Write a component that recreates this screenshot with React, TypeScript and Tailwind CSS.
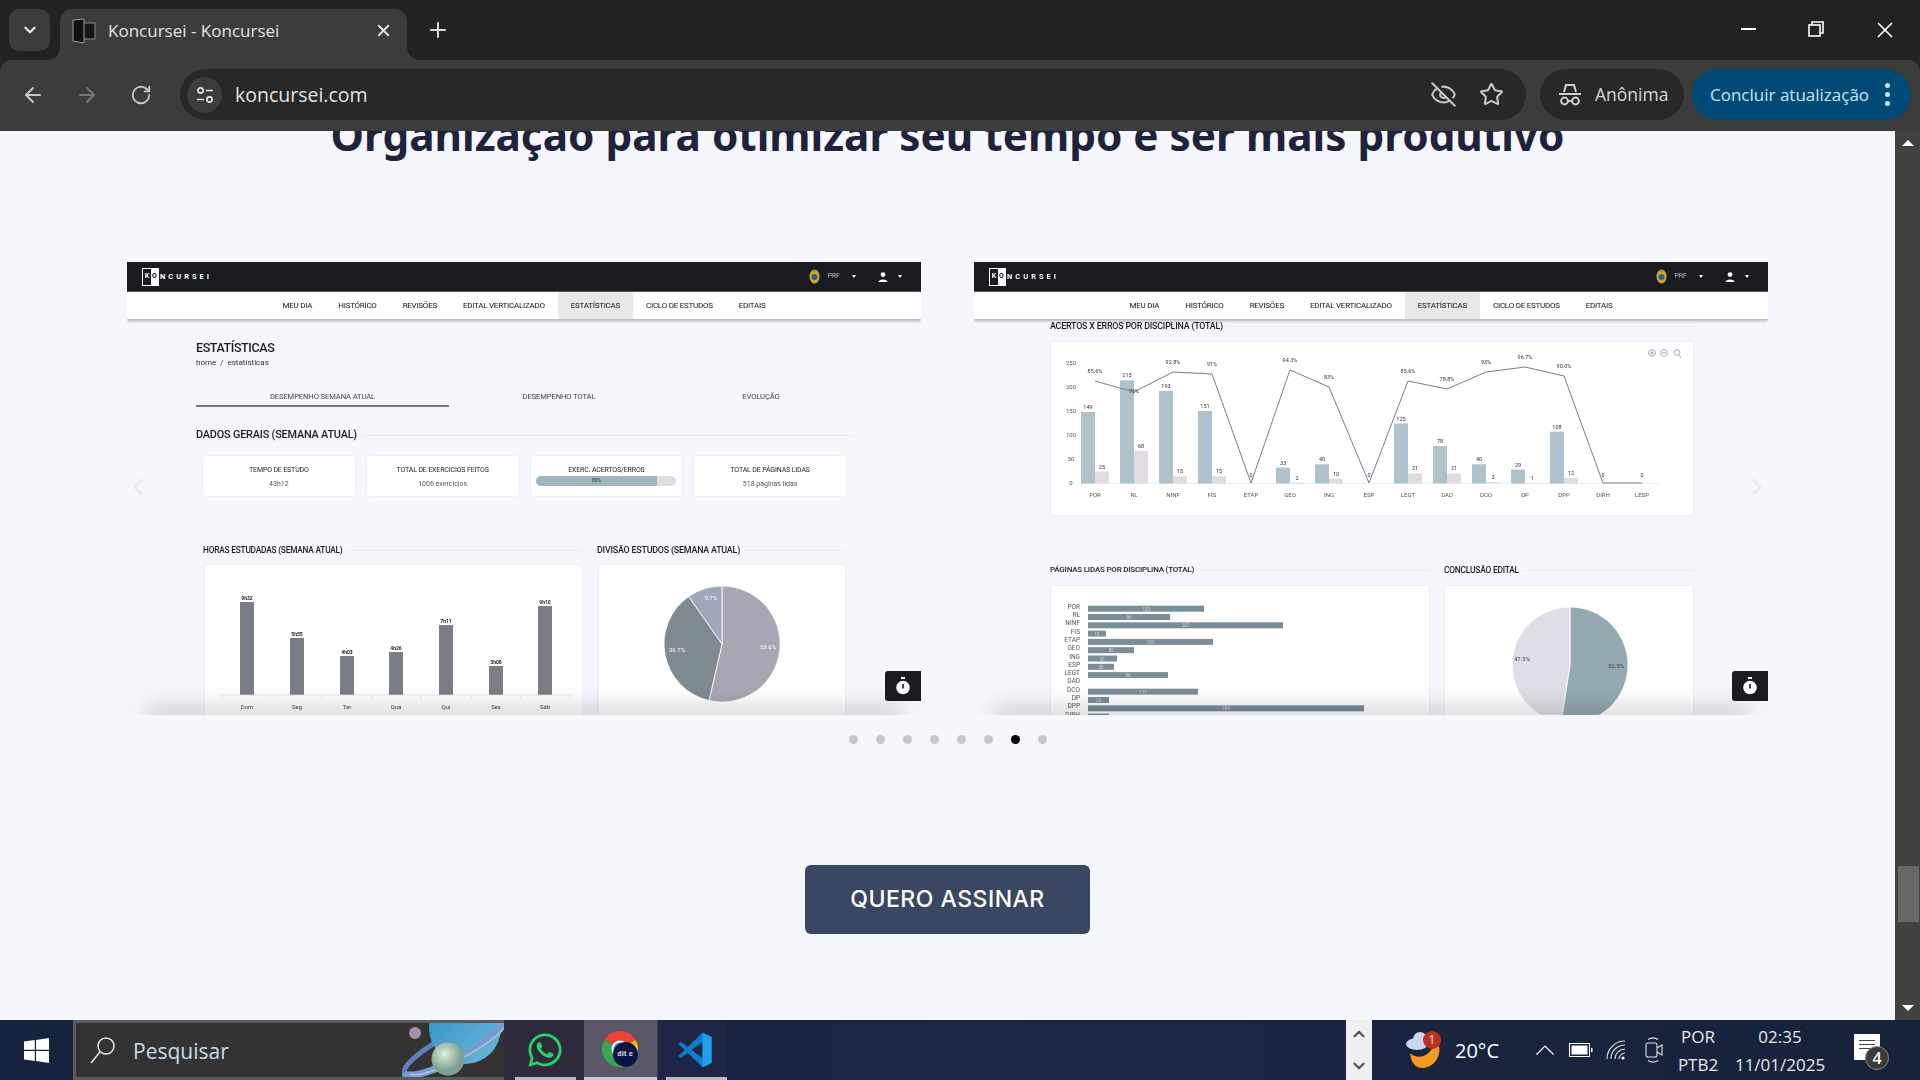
import React from "react";
import { ArrowLeft, ArrowRight, RotateCw, X, Plus, ChevronDown, ChevronUp, EyeOff, Star, ChevronLeft, ChevronRight } from "lucide-react";
import { FaWhatsapp } from "react-icons/fa";

const nav = ["MEU DIA", "HISTÓRICO", "REVISÕES", "EDITAL VERTICALIZADO", "ESTATÍSTICAS", "CICLO DE ESTUDOS", "EDITAIS"];

function Caret() {
  return <span className="inline-block w-0 h-0 border-x-[2.5px] border-x-transparent border-t-[3px] border-t-white" />;
}

function AppHeader() {
  return (
    <div>
      <div className="h-[30px] bg-[#1a1b20] flex items-center border-b border-[#555] pl-[15px] pr-[19px]">
        <div className="flex items-center h-[18px] w-[17px] border border-white">
          <span className="w-[8px] text-center text-[7px] leading-none font-bold text-white">K</span>
          <span className="w-[7px] h-full bg-white flex items-center justify-center text-[7px] leading-none font-bold text-black">O</span>
        </div>
        <span className="ml-[1px] text-[7.5px] font-bold tracking-[3px] text-white">NCURSEI</span>
        <div className="flex-1" />
        <svg width="11" height="15" viewBox="0 0 11 15"><ellipse cx="5.5" cy="7.5" rx="5" ry="7" fill="#c9a928" /><circle cx="5.5" cy="8" r="3" fill="#3a5a8c" /><path d="M3.5 2h4" stroke="#8a7a30" /></svg>
        <span className="ml-[7px] text-[7px] text-[#bbb]">PRF</span>
        <span className="ml-[12px] flex"><Caret /></span>
        <svg className="ml-[22px]" width="10" height="10" viewBox="0 0 10 10" fill="#fff"><circle cx="5" cy="2.6" r="2.4" /><path d="M0.5 10 C0.5 6.5 9.5 6.5 9.5 10Z" /></svg>
        <span className="ml-[10px] flex"><Caret /></span>
      </div>
      <div className="relative h-[27px] bg-white flex justify-center shadow-[0_2px_3px_rgba(0,0,0,0.28)]">
        {nav.map((n) => (
          <div key={n} className={`px-[13px] flex items-center text-[8px] tracking-[-0.25px] whitespace-nowrap text-[#111] ${n === "ESTATÍSTICAS" ? "bg-[#e8e8e8]" : ""}`}>{n}</div>
        ))}
      </div>
    </div>
  );
}

function SectionTitle({ t, size }: { t: string; size: string }) {
  return (
    <div className="flex items-center gap-[5px]">
      <span className={`${size} font-medium leading-[12px] tracking-[-0.2px] whitespace-nowrap text-[#1d1d1f]`}>{t}</span>
      <div className="flex-1 h-[1px] bg-[#e9ebf1]" />
    </div>
  );
}

function StatCard({ label, value, bar }: { label: string; value?: string; bar?: boolean }) {
  return (
    <div className="h-[42px] bg-white rounded-[3px] border border-[#eef0f5] flex flex-col items-center pt-[10px]">
      <div className="text-[7px] leading-[9px] tracking-[-0.15px] text-[#222] whitespace-nowrap">{label}</div>
      {bar ? (
        <div className="mt-[1px] w-[140px] h-[10px] rounded-full bg-[#e2dbe2] overflow-hidden">
          <div className="w-[86%] h-full bg-[#9fb4bf] flex items-center justify-center text-[5px] text-[#333]">86%</div>
        </div>
      ) : (
        <div className="mt-[5px] text-[7px] leading-[9px] text-[#555] whitespace-nowrap">{value}</div>
      )}
    </div>
  );
}

function BottomFade() {
  return <div className="absolute left-[20px] right-[20px] -bottom-[10px] h-[20px] bg-black/15 blur-[10px]" />;
}

function Timer() {
  return (
    <div className="absolute right-0 bottom-[14px] w-[36px] h-[30px] bg-[#1a1b1f] rounded-l-[3px] flex items-center justify-center">
      <svg width="14" height="18" viewBox="0 0 14 18" fill="#fff"><rect x="5" y="0" width="4" height="2" /><circle cx="7" cy="10.5" r="6.8" /><rect x="6.2" y="7" width="1.6" height="4.5" fill="#1a1b1f" /></svg>
    </div>
  );
}

function LeftSlide() {
  const bars = [
    [240, 603, "9h32", "Dom"], [290, 639, "5h55", "Seg"], [340, 657, "4h03", "Ter"], [389, 653, "4h26", "Qua"],
    [439, 626, "7h11", "Qui"], [489, 667, "3h08", "Sex"], [538, 607, "9h10", "Sáb"],
  ] as const;
  return (
    <div className="relative w-[794px] h-[453px] overflow-hidden">
      <div className="blur-[0.4px]">
        <AppHeader />
        <div className="pl-[69px] pr-[68px]">
          <div className="mt-[21px] text-[12.5px] leading-[16px] font-medium tracking-[-0.4px] text-[#1d1d1f]">ESTATÍSTICAS</div>
          <div className="mt-[2px] text-[8px] leading-[10px] text-[#333]">home&nbsp; /&nbsp; estatísticas</div>
          <div className="mt-[22px] flex text-[7.6px] leading-[14px] tracking-[-0.1px] text-[#444] text-center">
            <div className="w-[253px] h-[17px] border-b-2 border-[#777]">DESEMPENHO SEMANA ATUAL</div>
            <div className="w-[220px]">DESEMPENHO TOTAL</div>
            <div className="w-[184px]">EVOLUÇÃO</div>
          </div>
          <div className="mt-[22px]"><SectionTitle t="DADOS GERAIS (SEMANA ATUAL)" size="text-[10.9px]" /></div>
          <div className="mt-[14px] px-[6px] grid grid-cols-4 gap-[10px]">
            <StatCard label="TEMPO DE ESTUDO" value="43h12" />
            <StatCard label="TOTAL DE EXERCICIOS FEITOS" value="1006 exercícios" />
            <StatCard label="EXERC. ACERTOS/ERROS" bar />
            <StatCard label="TOTAL DE PÁGINAS LIDAS" value="518 páginas lidas" />
          </div>
          <div className="mt-[47px] ml-[7px] mr-[6px] grid grid-cols-[379px_248px] gap-[15px]">
            <SectionTitle t="HORAS ESTUDADAS (SEMANA ATUAL)" size="text-[8.3px]" />
            <SectionTitle t="DIVISÃO ESTUDOS (SEMANA ATUAL)" size="text-[8.9px]" />
          </div>
          <div className="mt-[8px] ml-[8px] mr-[7px] grid grid-cols-[379px_248px] gap-[15px]">
            <div className="h-[170px] bg-white rounded-[3px] border border-[#eef0f5]">
              <svg width="377" height="168" viewBox="205 566 377 168" className="block">
                {bars.map(([x, y, v, d]) => (
                  <g key={d}>
                    <rect x={x} y={y} width="14" height={696 - y} fill="#7b7e87" />
                    <text x={x + 7} y={y - 2} fontSize="5" fontWeight="700" textAnchor="middle" fill="#222">{v}</text>
                    <text x={x + 7} y="710" fontSize="6" textAnchor="middle" fill="#444">{d}</text>
                  </g>
                ))}
                <path d="M222 696H570M222 696v4M272 696v4M322 696v4M372 696v4M421 696v4M471 696v4M521 696v4M570 696v4" stroke="#dcdfe4" strokeWidth="0.7" />
              </svg>
            </div>
            <div className="h-[170px] bg-white rounded-[3px] border border-[#eef0f5]">
              <svg width="246" height="168" viewBox="1 1 246 168" className="block">
                <path d="M124 80 V22 A58 58 0 1 1 111 136.5 Z" fill="#a8a6b3" stroke="#fff" strokeWidth="0.8" />
                <path d="M124 80 L111 136.5 A58 58 0 0 1 90.7 32.5 Z" fill="#7f8a91" stroke="#fff" strokeWidth="0.8" />
                <path d="M124 80 L90.7 32.5 A58 58 0 0 1 124 22 Z" fill="#9fa8ba" stroke="#fff" strokeWidth="0.8" />
                <text x="170" y="85" fontSize="6" textAnchor="middle" fill="#fff">53.6%</text>
                <text x="79" y="88" fontSize="6" textAnchor="middle" fill="#fff">36.7%</text>
                <text x="113" y="36" fontSize="6" textAnchor="middle" fill="#fff">9.7%</text>
              </svg>
            </div>
          </div>
        </div>
      </div>
      <BottomFade />
      <Timer />
      <ChevronLeft className="absolute -left-[3px] top-[211px] text-[#e9ebf0]" size={28} strokeWidth={2.5} />
    </div>
  );
}

function RightSlide() {
  const xs = [1095, 1134, 1173, 1212, 1251, 1290, 1329, 1369, 1408, 1447, 1486, 1525, 1564, 1603, 1642];
  const labels = ["POR", "RL", "NINF", "FIS", "ETAP", "GEO", "ING", "ESP", "LEGT", "DAD", "DCO", "DP", "DPP", "DIRH", "LESP"];
  const ac = [149, 215, 193, 151, 0, 33, 40, 0, 125, 78, 40, 29, 108, 0, 0];
  const er = [25, 68, 15, 15, 0, 2, 10, 0, 21, 21, 3, 1, 12, 0, 0];
  const ly = [381, 392, 372, 374, 483, 370, 387, 483, 381, 389, 372, 367, 376, 483, 483];
  const pct: (string | null)[] = ["85.6%", "76%", "92.8%", "91%", null, "94.3%", "83%", null, "85.6%", "78.8%", "93%", "96.7%", "90.0%", null, null];
  const y = (v: number) => 483.5 - v * 0.48;
  const hb = [
    ["POR", 1204, 123], ["RL", 1170, 86], ["NINF", 1283, 207], ["FIS", 1106, 19], ["ETAP", 1213, 133], ["GEO", 1134, 50], ["ING", 1117, 31],
    ["ESP", 1114, 28], ["LEGT", 1168, 86], ["DAD", 0, 0], ["DCO", 1198, 117], ["DP", 1109, 23], ["DPP", 1364, 294], ["DIRH", 1109, 23],
  ] as const;
  return (
    <div className="relative w-[794px] h-[453px] overflow-hidden">
      <div className="blur-[0.4px]">
        <AppHeader />
        <div className="pl-[76px] pr-[74px]">
          <div className="mt-[1px]"><SectionTitle t="ACERTOS X ERROS POR DISCIPLINA (TOTAL)" size="text-[8.9px]" /></div>
          <div className="mt-[9px] h-[175px] bg-white rounded-[3px] border border-[#eef0f5]">
            <svg width="642" height="173" viewBox="1051 342 642 173" className="block">
              {[250, 200, 150, 100, 50, 0].map((v) => (
                <text key={v} x="1071" y={y(v) + 1} fontSize="6" textAnchor="middle" fill="#555">{v}</text>
              ))}
              <line x1="1081" x2="1660" y1="483.5" y2="483.5" stroke="#e3e6ea" strokeWidth="0.7" />
              {xs.map((x, i) => (
                <g key={labels[i]}>
                  {ac[i] > 0 && <rect x={x - 14} y={y(ac[i])} width="14" height={ac[i] * 0.48} fill="#afc2cb" />}
                  {er[i] > 0 && <rect x={x} y={y(er[i])} width="14" height={er[i] * 0.48} fill="#e2dce2" />}
                  {ac[i] > 0 && <text x={x - 7} y={y(ac[i]) - 3} fontSize="5.5" textAnchor="middle" fill="#333">{ac[i]}</text>}
                  {er[i] > 0 && <text x={x + 7} y={y(er[i]) - 3} fontSize="5.5" textAnchor="middle" fill="#333">{er[i]}</text>}
                  {ac[i] === 0 && <text x={x} y="477" fontSize="5.5" textAnchor="middle" fill="#333">0</text>}
                  {pct[i] && <text x={x} y={ly[i] - (i === 1 ? -1 : 8)} fontSize="5.5" textAnchor="middle" fill="#333">{pct[i]}</text>}
                  <text x={x} y="497" fontSize="6" textAnchor="middle" fill="#555">{labels[i]}</text>
                </g>
              ))}
              <polyline points={xs.map((x, i) => `${x},${ly[i]}`).join(" ")} fill="none" stroke="#777d95" strokeWidth="1" />
              <g fill="none" stroke="#8a97a3" strokeWidth="0.8">
                <circle cx="1652" cy="353" r="3.4" /><path d="M1650 353h4M1652 351v4" />
                <circle cx="1664" cy="353" r="3.4" /><path d="M1662 353h4" />
                <circle cx="1677" cy="352.5" r="2.8" /><path d="M1679 355l2 3" />
              </g>
            </svg>
          </div>
          <div className="mt-[48px] grid grid-cols-[380px_250px] gap-[14px]">
            <SectionTitle t="PÁGINAS LIDAS POR DISCIPLINA (TOTAL)" size="text-[8px]" />
            <SectionTitle t="CONCLUSÃO EDITAL" size="text-[8.4px]" />
          </div>
          <div className="mt-[9px] grid grid-cols-[380px_250px] gap-[14px]">
            <div className="h-[170px] bg-white rounded-[3px] border border-[#eef0f5]">
              <svg width="378" height="168" viewBox="1051 586 378 168" className="block">
                {hb.map(([l, e, v], i) => {
                  const cy = 608.7 + i * 8.3;
                  return (
                    <g key={l}>
                      <text x="1080" y={cy} fontSize="6.5" textAnchor="end" fill="#555">{l}</text>
                      {v > 0 && <rect x="1088" y={cy - 3} width={e - 1088} height="6" fill="#7a8d99" />}
                      {v > 0 && <text x={(1088 + e) / 2} y={cy + 2} fontSize="4.5" textAnchor="middle" fill="#cfd6da">{v}</text>}
                    </g>
                  );
                })}
              </svg>
            </div>
            <div className="h-[170px] bg-white rounded-[3px] border border-[#eef0f5]">
              <svg width="248" height="168" viewBox="1 1 248 168" className="block">
                <path d="M126 80 V22 A58 58 0 1 1 117 137.3 Z" fill="#94a9b2" stroke="#fff" strokeWidth="0.8" />
                <path d="M126 80 L117 137.3 A58 58 0 0 1 126 22 Z" fill="#dfdee6" stroke="#fff" strokeWidth="0.8" />
                <text x="172" y="83" fontSize="6" textAnchor="middle" fill="#444">52.5%</text>
                <text x="78" y="76" fontSize="6" textAnchor="middle" fill="#444">47.5%</text>
              </svg>
            </div>
          </div>
        </div>
      </div>
      <BottomFade />
      <Timer />
      <ChevronRight className="absolute -right-[3px] top-[211px] text-[#e9ebf0]" size={28} strokeWidth={2.5} />
    </div>
  );
}

function Favicon() {
  return (
    <svg width="24" height="26" viewBox="0 0 24 26">
      <rect x="9" y="5" width="14" height="16" fill="#15171a" stroke="#8a8a8a" strokeWidth="1" />
      <path d="M1 2 L12 1 V25 L1 23 Z" fill="#111" stroke="#9a9a9a" strokeWidth="1" />
    </svg>
  );
}

function TabStrip() {
  return (
    <div className="h-[60px] flex shrink-0">
      <div className="ml-[9px] mt-[9px] w-[41px] h-[42px] rounded-[10px] bg-[#3c3c3c] flex items-center justify-center">
        <ChevronDown size={18} strokeWidth={3} className="text-[#e8e8e8]" />
      </div>
      <div className="relative ml-[10px] mt-[9px] w-[347px] h-[51px] rounded-t-[12px] bg-[#3c3c3c] flex items-center pb-[7px] pl-[12px]">
        <div className="absolute -left-[12px] bottom-0 w-[12px] h-[12px] bg-[radial-gradient(circle_at_0_0,transparent_11.5px,#3c3c3c_12px)]" />
        <div className="absolute -right-[12px] bottom-0 w-[12px] h-[12px] bg-[radial-gradient(circle_at_100%_0,transparent_11.5px,#3c3c3c_12px)]" />
        <Favicon />
        <span className="ml-[12px] text-[17px] text-[#e3e3e3] whitespace-nowrap">Koncursei - Koncursei</span>
        <X size={19} strokeWidth={2.4} className="absolute left-[314px] top-[12px] text-[#e3e3e3]" />
      </div>
      <Plus size={24} strokeWidth={2} className="ml-[19px] mt-[18px] text-[#d8d8d8]" />
      <div className="flex-1" />
      <div className="w-[68px] flex justify-center pt-[28px]"><div className="w-[15px] h-[2px] bg-white" /></div>
      <div className="w-[68px] flex justify-center pt-[21px]">
        <svg width="16" height="16" viewBox="0 0 16 16" fill="none" stroke="#fff" strokeWidth="1.6"><rect x="1" y="4" width="11" height="11" /><path d="M4 4V1h11v11h-3" /></svg>
      </div>
      <div className="w-[70px] flex justify-center pt-[17px]"><X size={26} strokeWidth={1.6} className="text-white" /></div>
    </div>
  );
}

function Toolbar() {
  return (
    <div className="h-[71px] shrink-0 bg-[#3c3c3c] rounded-t-[12px] flex items-start pt-[9px]">
      <div className="w-[180px] h-[51px] flex items-center text-[#c7c7c7]">
        <ArrowLeft size={24} className="ml-[21px]" strokeWidth={2} />
        <ArrowRight size={24} className="ml-[30px] text-[#777]" strokeWidth={2} />
        <RotateCw size={22} className="ml-[31px]" strokeWidth={2} />
      </div>
      <div className="w-[1346px] h-[51px] rounded-full bg-[#282828] flex items-center pl-[7px]">
        <div className="w-[35px] h-[36px] rounded-full bg-[#3c3c3c] flex items-center justify-center">
          <svg width="18" height="18" viewBox="0 0 18 18" fill="none" stroke="#e3e3e3" strokeWidth="1.7"><circle cx="4.5" cy="4.5" r="2.6" /><path d="M10 4.5h7M1 13.5h7" /><circle cx="13.5" cy="13.5" r="2.6" /></svg>
        </div>
        <span className="ml-[13px] text-[19.5px] text-[#e3e3e3]">koncursei.com</span>
        <div className="flex-1" />
        <EyeOff size={27} strokeWidth={1.8} className="text-[#c7c7c7]" />
        <Star size={25} strokeWidth={2} className="ml-[22px] mr-[22px] text-[#c7c7c7]" />
      </div>
      <div className="ml-[14px] w-[144px] h-[51px] rounded-full bg-[#282828] flex items-center pl-[17px]">
        <svg width="26" height="26" viewBox="0 0 26 26" fill="none" stroke="#d0d0d0" strokeWidth="2"><path d="M7 10 L9 3 H17 L19 10" /><path d="M2 12 H24" /><circle cx="7.5" cy="19" r="3.4" /><circle cx="18.5" cy="19" r="3.4" /><path d="M11 19h4" /></svg>
        <span className="ml-[12px] text-[17.5px] text-[#d8d8d8]">Anônima</span>
      </div>
      <div className="ml-[8px] w-[219px] h-[51px] rounded-full bg-[#004a77] flex items-center pl-[18px]">
        <span className="text-[17px] text-[#c2e7ff] whitespace-nowrap">Concluir atualização</span>
        <div className="ml-[16px] flex flex-col gap-[4px]">
          <span className="w-[5px] h-[5px] rounded-full bg-[#c2e7ff]" /><span className="w-[5px] h-[5px] rounded-full bg-[#c2e7ff]" /><span className="w-[5px] h-[5px] rounded-full bg-[#c2e7ff]" />
        </div>
      </div>
    </div>
  );
}

function Scrollbar() {
  return (
    <div className="w-[25px] bg-[#424242] flex flex-col items-center pt-[9px] shrink-0">
      <span className="w-0 h-0 border-x-[6px] border-x-transparent border-b-[6px] border-b-white" />
      <div className="mt-[720px] ml-[1px] w-[21px] h-[56px] bg-[#686868]" />
      <div className="flex-1" />
      <span className="w-0 h-0 border-x-[6px] border-x-transparent border-t-[6px] border-t-white mb-[9px]" />
    </div>
  );
}

function Planet() {
  return (
    <svg width="102" height="54" viewBox="0 0 102 54" className="absolute right-0 top-0">
      <defs>
        <linearGradient id="pl" x1="0" x2="1" y1="0" y2="1"><stop offset="0" stopColor="#2a8fc4" /><stop offset="1" stopColor="#6fb7d9" /></linearGradient>
        <radialGradient id="gs" cx="0.4" cy="0.35"><stop offset="0" stopColor="#dcefd9" /><stop offset="1" stopColor="#7fa091" /></radialGradient>
      </defs>
      <ellipse cx="52" cy="24" rx="56" ry="13" transform="rotate(-28 52 24)" fill="none" stroke="#5f7fb8" strokeWidth="5" />
      <circle cx="63" cy="5" r="36" fill="url(#pl)" />
      <path d="M2 50 A56 13 -28 0 0 101 -2" fill="none" stroke="#7b9bd0" strokeWidth="7" />
      <path d="M8 51 A56 13 -28 0 0 104 2" fill="none" stroke="#a9c6e4" strokeWidth="1.5" />
      <circle cx="46" cy="36" r="16.5" fill="url(#gs)" />
      <circle cx="13" cy="10" r="6" fill="#a58fb0" />
    </svg>
  );
}

function Chrome() {
  return (
    <div className="relative w-[38px] h-[38px]">
      <svg width="36" height="36" viewBox="0 0 36 36">
        <path d="M18 18 L2.4 9 A18 18 0 0 1 33.6 9 Z" fill="#ea4335" />
        <path d="M18 18 L33.6 9 A18 18 0 0 1 18 36 Z" fill="#fbbc04" />
        <path d="M18 18 L18 36 A18 18 0 0 1 2.4 9 Z" fill="#34a853" />
        <circle cx="18" cy="18" r="8.5" fill="#fff" /><circle cx="18" cy="18" r="6.5" fill="#4285f4" />
      </svg>
      <div className="absolute left-[11px] top-[11px] w-[25px] h-[25px] rounded-full bg-[#0a1446] flex items-center justify-center text-[7px] font-bold text-[#d8d8e0]">dit e</div>
    </div>
  );
}

function TaskButton({ children, w, cls }: { children: React.ReactNode; w: string; cls: string }) {
  return <div className={`relative h-full flex items-center justify-center ${w} ${cls}`}>{children}</div>;
}

function Taskbar() {
  return (
    <div className="h-[60px] shrink-0 flex items-stretch bg-[linear-gradient(90deg,#16233e_0%,#16233e_35%,#1f2545_50%,#1a2440_70%,#16233b_100%)] font-['Open_Sans',sans-serif]">
      <div className="w-[73px] flex items-center justify-center">
        <svg width="25" height="25" viewBox="0 0 25 25" fill="#fff"><path d="M0 3.6 L10.8 2.1 V11.8 H0Z M12 1.9 L25 0 V11.8 H12Z M0 13 H10.8 V22.9 L0 21.4Z M12 13 H25 V25 L12 23.1Z" /></svg>
      </div>
      <div className="relative w-[431px] bg-[#333] border-t-[3px] border-l-[3px] border-b-[3px] border-[#5b5b5b] flex items-center pl-[14px] overflow-hidden">
        <svg width="26" height="28" viewBox="0 0 26 28" fill="none" stroke="#e8e8e8" strokeWidth="1.5"><circle cx="16" cy="10" r="8" /><path d="M10 16 L1 27" /></svg>
        <span className="ml-[17px] mt-[4px] text-[21px] text-[#c9dde8]">Pesquisar</span>
        <Planet />
      </div>
      <TaskButton w="w-[80px]" cls="bg-[#2e2a3c] pl-[1px]">
        <FaWhatsapp size={38} className="text-[#25d366]" />
        <div className="absolute bottom-0 left-[11px] w-[61px] h-[3px] bg-[#b9b9c0]" />
      </TaskButton>
      <TaskButton w="w-[73px]" cls="bg-[#5a5668]">
        <Chrome />
        <div className="absolute bottom-0 inset-x-0 h-[3px] bg-[#c9c9cf]" />
      </TaskButton>
      <TaskButton w="w-[69px]" cls="bg-[#1f2545] border-l border-[#3e4257] pl-[6px]">
        <svg width="36" height="36" viewBox="0 0 100 100">
          <path fillRule="evenodd" d="M71 2 L30 42 L11 28 L3 33 L22 50 L3 67 L11 72 L30 58 L71 98 L96 86 V14 Z M71 28 L40 50 L71 72 Z" fill="#0a7fd0" />
          <path d="M71 2 L96 14 V86 L71 98 Z" fill="#21a0f0" />
        </svg>
        <div className="absolute bottom-0 left-[8px] w-[61px] h-[3px] bg-[#b9b9c0]" />
      </TaskButton>
      <div className="flex-1" />
      <div className="w-[26px] bg-[#efefef] flex flex-col items-center justify-center gap-[14px] text-[#555]">
        <ChevronUp size={18} strokeWidth={3} />
        <ChevronDown size={18} strokeWidth={3} />
      </div>
      <div className="relative flex items-center w-[548px] text-white">
        <svg className="ml-[33px]" width="40" height="40" viewBox="0 0 40 40">
          <path d="M5 23 C12 30 25 28 30 12 C38 14 36 36 18 38 C10 38 6 32 5 23Z" fill="#f39a1f" />
          <ellipse cx="12" cy="14" rx="11" ry="6" fill="#c4d9ef" />
          <ellipse cx="15" cy="9" rx="7" ry="7" fill="#c4d9ef" />
          <circle cx="27" cy="10" r="9" fill="#c42b1c" />
          <text x="27" y="14" fontSize="12" textAnchor="middle" fill="#fff">1</text>
        </svg>
        <span className="ml-[10px] mt-[2px] text-[20px]">20°C</span>
        <svg className="ml-[37px]" width="18" height="10" viewBox="0 0 18 10" fill="none" stroke="#fff" strokeWidth="1.2"><path d="M0.5 9.5 L9 1 L17.5 9.5" /></svg>
        <svg className="ml-[15px]" width="24" height="14" viewBox="0 0 24 14"><rect x="0.5" y="0.5" width="20" height="13" fill="none" stroke="#fff" /><rect x="2.5" y="2.5" width="16" height="9" fill="#fff" /><rect x="22" y="5" width="1.5" height="4" fill="#fff" /></svg>
        <svg className="ml-[13px]" width="20" height="20" viewBox="0 0 20 20" fill="none" stroke="#d8d8d8" strokeWidth="1.1"><path d="M1 19 C1 9 9 1 19 1" /><path d="M5 19 C5 11 11 5 19 5" /><path d="M9 19 C9 13.5 13.5 9 19 9" /><path d="M13 19 C13 16 16 13 19 13" /><circle cx="17" cy="18" r="1.6" fill="#fff" stroke="none" /></svg>
        <svg className="ml-[19px]" width="18" height="26" viewBox="0 0 18 26" fill="none" stroke="#e0e0e0" strokeWidth="1.1"><rect x="1" y="6" width="11" height="14" rx="2" /><path d="M12 11 L17 8 V18 L12 15" /><path d="M3 2.5 C6 0.5 10 0.5 13 2.5 M3 23.5 C6 25.5 10 25.5 13 23.5" /></svg>
        <div className="ml-[12px] mt-[2px] w-[46px] flex flex-col items-center text-[17px] leading-[28px] text-[#e8e8e8]"><span>POR</span><span>PTB2</span></div>
        <div className="ml-[11px] mt-[2px] w-[96px] flex flex-col items-center text-[17px] leading-[28px] text-[#e8e8e8]"><span>02:35</span><span className="whitespace-nowrap">11/01/2025</span></div>
        <div className="relative ml-[26px] w-[26px] h-[26px] bg-white mb-[6px]">
          <div className="mt-[6px] mx-[5px] h-[1px] bg-[#444]" /><div className="mt-[3px] mx-[5px] h-[1px] bg-[#444]" /><div className="mt-[3px] mx-[5px] h-[1px] bg-[#444]" />
          <div className="absolute left-[11px] top-[12px] w-[24px] h-[24px] rounded-full bg-[#3a3a3a] border border-[#888] flex items-center justify-center text-[16px] font-semibold text-white">4</div>
        </div>
      </div>
    </div>
  );
}

export default function App() {
  const dots = [0, 1, 2, 3, 4, 5, 6, 7];
  return (
    <div className="w-[1920px] h-[1080px] flex flex-col overflow-hidden bg-[#202322] font-['Roboto',sans-serif]">
      <div className="font-['Open_Sans',sans-serif]">
        <TabStrip />
        <Toolbar />
      </div>
      <div className="flex-1 flex min-h-0">
        <main className="flex-1 bg-[#f5f7fc] overflow-hidden flex flex-col items-center">
          <h1 className="-mt-[20px] text-[42.3px] leading-[48px] font-bold text-[#20213a] whitespace-nowrap font-['Noto_Sans',sans-serif]">Organização para otimizar seu tempo e ser mais produtivo</h1>
          <div className="mt-[103px] flex gap-[53px]">
            <LeftSlide />
            <RightSlide />
          </div>
          <div className="mt-[20px] flex gap-[18px]">
            {dots.map((d) => (
              <span key={d} className={`w-[9px] h-[9px] rounded-full ${d === 6 ? "bg-black" : "bg-[#c7c7c9]"}`} />
            ))}
          </div>
          <button className="mt-[121px] w-[285px] h-[69px] rounded-[6px] bg-[#3a4763] text-white text-[23px] font-medium tracking-[0.5px] font-['Inter',sans-serif]">QUERO ASSINAR</button>
        </main>
        <Scrollbar />
      </div>
      <Taskbar />
    </div>
  );
}
